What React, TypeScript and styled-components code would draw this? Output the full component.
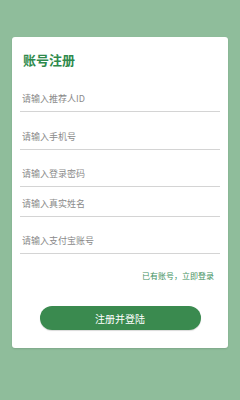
import React from "react";
import styled, { createGlobalStyle } from "styled-components";

const GlobalStyle = createGlobalStyle`
  html, body {
    margin: 0;
    padding: 0;
    background: #8fbd9b;
  }
  body {
    font-family: "Noto Sans CJK SC", "Noto Sans", sans-serif;
  }
`;

const fields = [
  { placeholder: "请输入推荐人ID", height: 33 },
  { placeholder: "请输入手机号", height: 38 },
  { placeholder: "请输入登录密码", height: 37 },
  { placeholder: "请输入真实姓名", height: 30 },
  { placeholder: "请输入支付宝账号", height: 37 },
];

const App = () => {
  return (
    <Page>
      <GlobalStyle />
      <Card>
        <Title>账号注册</Title>
        <Form>
          {fields.map((f) => (
            <Field key={f.placeholder} $height={f.height}>
              <Input placeholder={f.placeholder} />
            </Field>
          ))}
        </Form>
        <LinkRow>
          <LoginLink>已有账号，立即登录</LoginLink>
        </LinkRow>
        <Submit>注册并登陆</Submit>
      </Card>
    </Page>
  );
};

const Page = styled.div`
  width: 240px;
  height: 400px;
  box-sizing: border-box;
  padding: 37px 12px 0 12px;
  background: #8fbd9b;
`;

const Card = styled.div`
  background: #fff;
  border-radius: 3px;
  box-shadow: 0 1px 2px rgba(0, 0, 0, 0.12);
  height: 311px;
  box-sizing: border-box;
  padding: 13px 8px 0 8px;
  display: flex;
  flex-direction: column;
`;

const Title = styled.h1`
  margin: 0 0 0 3px;
  font-size: 13px;
  line-height: 20px;
  font-weight: 700;
  color: #2f8a4c;
`;

const Form = styled.div`
  margin-top: 9px;
  display: flex;
  flex-direction: column;
`;

const Field = styled.div<{ $height: number }>`
  height: ${(p) => p.$height}px;
  box-sizing: border-box;
  border-bottom: 1px solid #d4d4d4;
  display: flex;
  align-items: flex-end;
  padding-bottom: 6px;
`;

const Input = styled.input`
  border: none;
  outline: none;
  background: transparent;
  width: 100%;
  padding: 0 0 0 2px;
  font-family: "Noto Sans CJK SC", "Noto Sans", sans-serif;
  font-size: 9px;
  line-height: 13px;
  height: 13px;
  color: #333;
  &::placeholder {
    color: #8a8a8a;
  }
`;

const LinkRow = styled.div`
  display: flex;
  justify-content: flex-end;
  margin-top: 16px;
  padding-right: 6px;
`;

const LoginLink = styled.span`
  font-size: 8px;
  line-height: 12px;
  color: #3f9060;
`;

const Submit = styled.button`
  align-self: center;
  margin-top: 24px;
  width: 161px;
  height: 24px;
  border: none;
  border-radius: 12px;
  background: #3a8a4f;
  color: #fff;
  font-family: "Noto Sans CJK SC", "Noto Sans", sans-serif;
  font-size: 10px;
  padding: 0;
  box-shadow: 0 1px 1px rgba(0, 0, 0, 0.15);
`;

export default App;
